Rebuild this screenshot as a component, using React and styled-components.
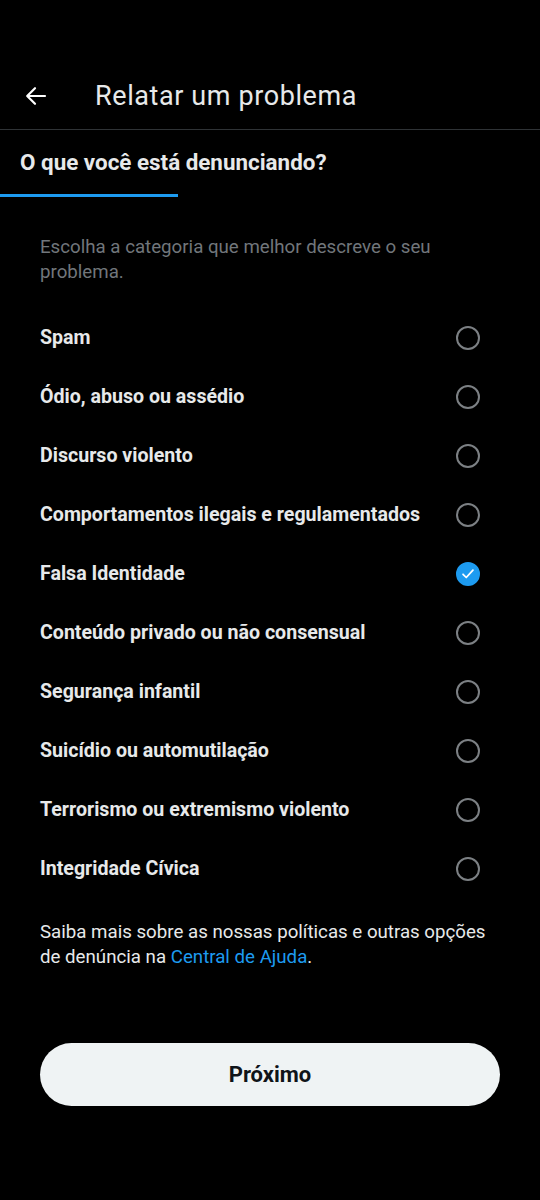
import React, { useState } from "react";
import styled, { createGlobalStyle } from "styled-components";

const GlobalStyle = createGlobalStyle`
    body {
        margin: 0;
        background: #000;
        font-family: Roboto, "Noto Sans", sans-serif;
    }
`;

const categories = [
    "Spam",
    "Ódio, abuso ou assédio",
    "Discurso violento",
    "Comportamentos ilegais e regulamentados",
    "Falsa Identidade",
    "Conteúdo privado ou não consensual",
    "Segurança infantil",
    "Suicídio ou automutilação",
    "Terrorismo ou extremismo violento",
    "Integridade Cívica",
];

const App = () => {
    const [selected, setSelected] = useState(4);

    return (
        <>
            <GlobalStyle />
            <Page>
                <Header>
                    <BackButton aria-label="Voltar">
                        <svg width="24" height="24" viewBox="0 0 24 24" fill="none">
                            <path
                                d="M21 12H3.8M11 4.2L3.2 12l7.8 7.8"
                                stroke="#fff"
                                strokeWidth="2.2"
                                strokeLinecap="round"
                                strokeLinejoin="round"
                            />
                        </svg>
                    </BackButton>
                    <Title>Relatar um problema</Title>
                </Header>

                <Heading>O que você está denunciando?</Heading>
                <Progress />

                <Description>
                    Escolha a categoria que melhor descreve o seu problema.
                </Description>

                <List>
                    {categories.map((label, i) => (
                        <Row key={label} onClick={() => setSelected(i)}>
                            <Label>{label}</Label>
                            <Radio $checked={selected === i}>
                                {selected === i && (
                                    <svg width="14" height="14" viewBox="0 0 24 24" fill="none">
                                        <path
                                            d="M3.5 12.5l5.5 5.5L20.5 5.5"
                                            stroke="#fff"
                                            strokeWidth="3"
                                            strokeLinecap="round"
                                            strokeLinejoin="round"
                                        />
                                    </svg>
                                )}
                            </Radio>
                        </Row>
                    ))}
                </List>

                <Footer>
                    Saiba mais sobre as nossas políticas e outras opções de denúncia na{" "}
                    <HelpLink href="#">Central de Ajuda</HelpLink>.
                </Footer>

                <NextButton>Próximo</NextButton>
            </Page>
        </>
    );
};

export default App;

const Page = styled.div`
    width: 540px;
    height: 1200px;
    background: #000;
    display: flex;
    flex-direction: column;
    overflow: hidden;
`;

const Header = styled.div`
    height: 130px;
    box-sizing: border-box;
    padding-top: 62px;
    display: flex;
    align-items: flex-start;
    border-bottom: 1px solid #2f3336;
`;

const BackButton = styled.button`
    width: 68px;
    height: 68px;
    padding: 0 0 0 24px;
    border: none;
    background: none;
    display: flex;
    align-items: center;
    justify-content: flex-start;
    cursor: pointer;
`;

const Title = styled.h1`
    margin: 0 0 0 27px;
    height: 68px;
    display: flex;
    align-items: center;
    font-size: 27px;
    font-weight: 400;
    color: #e7e9ea;
    letter-spacing: 0.6px;
`;

const Heading = styled.h2`
    margin: 0;
    height: 64px;
    padding: 0 20px;
    display: flex;
    align-items: center;
    font-size: 22.4px;
    font-weight: 700;
    color: #e7e9ea;
`;

const Progress = styled.div`
    width: 178px;
    height: 3px;
    background: #1d9bf0;
`;

const Description = styled.p`
    margin: 38px 70px 23px 40px;
    font-size: 18.7px;
    line-height: 25px;
    color: #71767b;
`;

const List = styled.div`
    display: flex;
    flex-direction: column;
`;

const Row = styled.div`
    height: 59px;
    padding: 0 60px 0 40px;
    display: flex;
    align-items: center;
    justify-content: space-between;
    cursor: pointer;
`;

const Label = styled.span`
    font-size: 19.6px;
    font-weight: 700;
    color: #e7e9ea;
`;

const Radio = styled.span`
    width: 24px;
    height: 24px;
    box-sizing: border-box;
    border-radius: 50%;
    border: 2px solid ${(p) => (p.$checked ? "#1d9bf0" : "#7c8084")};
    background: ${(p) => (p.$checked ? "#1d9bf0" : "transparent")};
    display: flex;
    align-items: center;
    justify-content: center;
    flex-shrink: 0;
`;

const Footer = styled.p`
    margin: 22px 40px 0 40px;
    font-size: 18.7px;
    line-height: 25px;
    color: #e7e9ea;
`;

const HelpLink = styled.a`
    color: #1d9bf0;
    text-decoration: none;
`;

const NextButton = styled.button`
    margin: 73px 40px 0 40px;
    height: 63px;
    border: none;
    border-radius: 32px;
    background: #eff3f4;
    color: #0f1419;
    font-family: Roboto, "Noto Sans", sans-serif;
    font-size: 22px;
    font-weight: 700;
    cursor: pointer;
`;
